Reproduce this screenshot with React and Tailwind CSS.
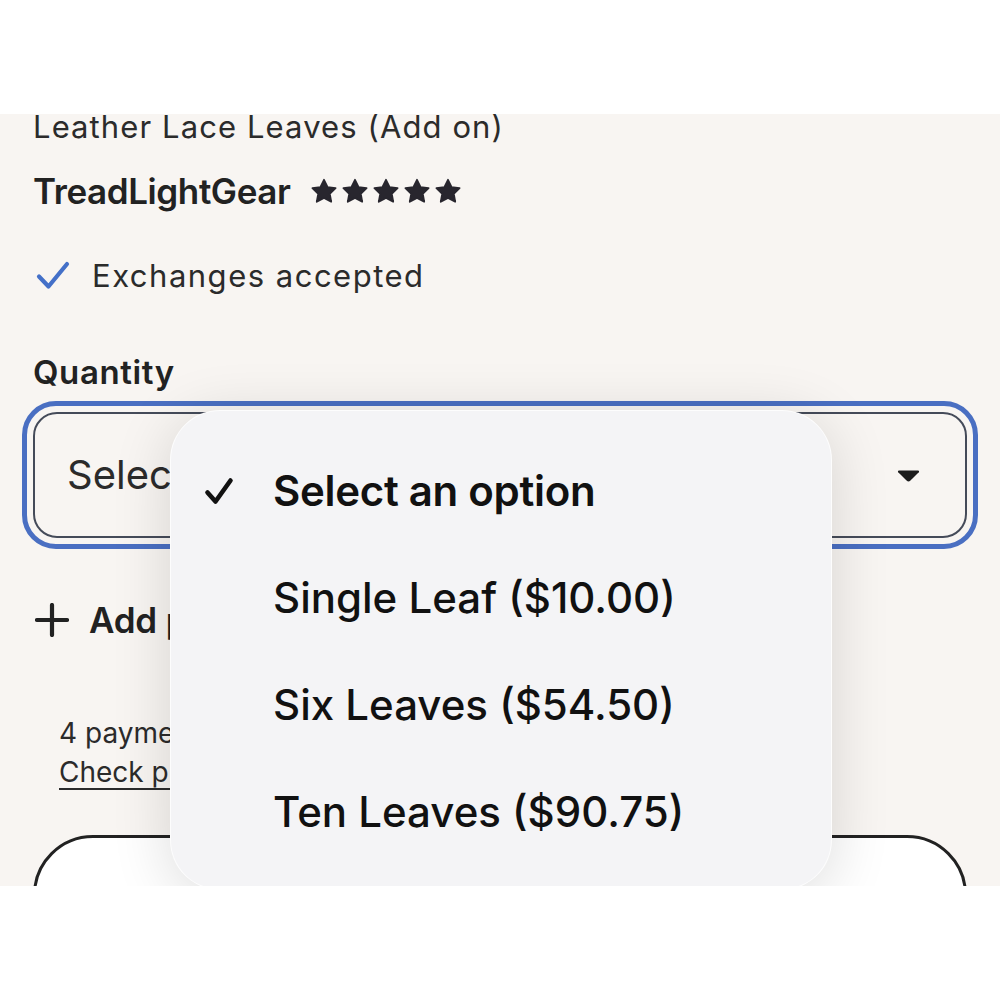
import React from "react";

const font = { fontFamily: "Inter, 'Noto Sans', sans-serif" };

/* ================= ICONS ================= */
function Star() {
  return (
    <svg width="28" height="27" viewBox="0 0 24 24" className="fill-[#28262e]">
      <path
        d="M12 1.6l3.2 6.5 7.1.9-5.2 5 1.3 7.1L12 17.7l-6.4 3.4 1.3-7.1-5.2-5 7.1-.9z"
        stroke="#28262e"
        strokeWidth="1.6"
        strokeLinejoin="round"
      />
    </svg>
  );
}

function BlueCheck() {
  return (
    <svg width="34" height="30" viewBox="0 0 34 30" fill="none">
      <path d="M3 15.5l9.5 10L31 3" stroke="#4470c8" strokeWidth="4.2" strokeLinecap="round" strokeLinejoin="round" />
    </svg>
  );
}

function Caret() {
  return (
    <svg width="23" height="13" viewBox="0 0 23 13">
      <path d="M2 1.5h19c1 0 1.4 1 .8 1.7l-8.6 8.6c-.9.9-2.5.9-3.4 0L1.2 3.2C.6 2.5 1 1.5 2 1.5z" fill="#1c1c1c" />
    </svg>
  );
}

function MenuCheck() {
  return (
    <svg width="30" height="28" viewBox="0 0 30 28" fill="none">
      <path d="M3.5 15.5l8 9L26.5 3.5" stroke="#111" strokeWidth="4.6" strokeLinecap="round" strokeLinejoin="round" />
    </svg>
  );
}

export default function App() {
  const options = [
    { label: "Select an option", selected: true },
    { label: "Single Leaf ($10.00)" },
    { label: "Six Leaves ($54.50)" },
    { label: "Ten Leaves ($90.75)" },
  ];

  return (
    <div className="w-[1000px] h-[1000px] bg-white flex flex-col" style={font}>
      {/* TOP WHITE */}
      <div className="h-[114px] shrink-0" />

      {/* PRODUCT PANEL */}
      <div className="relative h-[772px] shrink-0 overflow-hidden bg-[#f8f5f2] px-[33px] text-[#222]">
        <p className="text-[31px] leading-[26px] text-[#2b2b2b] tracking-[1.1px] whitespace-nowrap">
          Leather Lace Leaves (Add on)
        </p>

        <div className="mt-[31px] h-[40px] flex items-center gap-[19px]">
          <span className="text-[35px] font-semibold tracking-[-0.4px] text-[#222]">TreadLightGear</span>
          <div className="flex items-center gap-[3px]">
            <Star />
            <Star />
            <Star />
            <Star />
            <Star />
          </div>
        </div>

        <div className="mt-[45px] h-[40px] flex items-center gap-[22px]">
          <div className="pl-[3px]">
            <BlueCheck />
          </div>
          <span className="text-[31px] tracking-[1.5px] text-[#2b2b2b]">Exchanges accepted</span>
        </div>

        <p className="mt-[58px] h-[36px] leading-[36px] text-[33px] font-semibold tracking-[0.6px] text-[#222]">
          Quantity
        </p>

        {/* SELECT */}
        <div className="mt-[11px] mx-[-11px] rounded-[34px] border-[5px] border-[#4a6fc2] p-[6px]">
          <div className="h-[126px] rounded-[24px] border-2 border-[#454b59] flex items-center justify-between pl-[32px] pr-[45px]">
            <span className="text-[40px] text-[#2b2b2b]">Select an option</span>
            <Caret />
          </div>
        </div>

        <div className="mt-[51px] h-[40px] flex items-center gap-[20px]">
          <svg width="34" height="34" viewBox="0 0 34 34" className="ml-[2px]">
            <path d="M17 2v30M2 17h30" stroke="#222" strokeWidth="4.2" strokeLinecap="round" />
          </svg>
          <span className="text-[35px] font-semibold tracking-[-0.2px] text-[#222]">Add personalization</span>
        </div>

        <div className="mt-[74px] pl-[26px] text-[28px] leading-[39px] text-[#2b2b2b]">
          <p>4 payments of $2.50 at 0% interest with Klarna</p>
          <p className="underline underline-offset-[6px] decoration-2">Check purchasing power</p>
        </div>

        <div className="mt-[43px] h-[120px] rounded-[60px] border-[3px] border-[#222] bg-white" />

        {/* ================= DROPDOWN MENU ================= */}
        <div className="absolute left-[170px] top-[296px] w-[662px] h-[480px] rounded-[50px] border border-white/80 bg-[#f4f4f6] shadow-[0_8px_60px_rgba(0,0,0,0.14)] pt-[26px]">
          {options.map((o) => (
            <div key={o.label} className="h-[107px] flex items-center">
              <div className="w-[102px] flex justify-end pr-[39px]">
                {o.selected && <MenuCheck />}
              </div>
              <span
                className={`text-[42px] text-[#111] ${o.selected ? "font-semibold tracking-[-0.3px]" : "font-medium tracking-[0px]"}`}
              >
                {o.label}
              </span>
            </div>
          ))}
        </div>
      </div>
    </div>
  );
}
